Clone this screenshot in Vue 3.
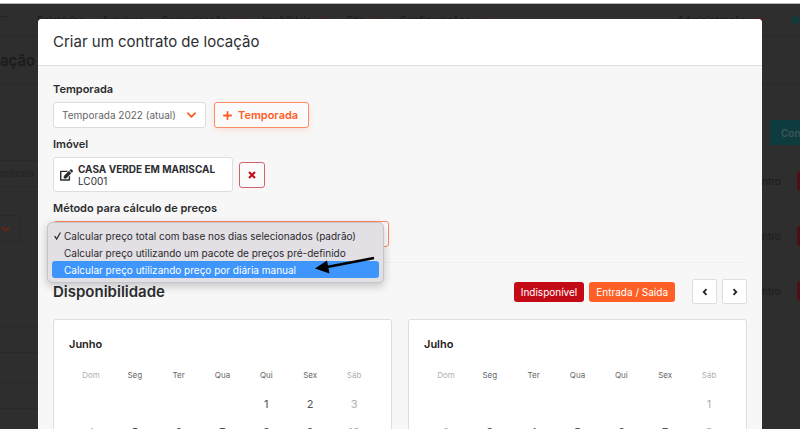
<script setup>
import { ref } from 'vue'

const navItems = [
  { label: 'Relatórios' },
  { label: 'Arquivos' },
  { label: 'Comunicação', menu: true },
  { label: 'Imobiliária', menu: true },
  { label: 'Site', menu: true },
  { label: 'Configurações', menu: true }
]

const weekdays = ['Dom', 'Seg', 'Ter', 'Qua', 'Qui', 'Sex', 'Sáb']

const buildWeeks = (offset, days) => {
  const cells = [...Array(offset).fill(''), ...Array.from({ length: days }, (_, i) => i + 1)]
  const weeks = []
  for (let i = 0; i < cells.length; i += 7) weeks.push(cells.slice(i, i + 7))
  return weeks
}

const months = [
  { name: 'Junho', weeks: buildWeeks(4, 30) },
  { name: 'Julho', weeks: buildWeeks(6, 31) }
]

const methods = [
  'Calcular preço total com base nos dias selecionados (padrão)',
  'Calcular preço utilizando um pacote de preços pré-definido',
  'Calcular preço utilizando preço por diária manual'
]
const method = ref(0)
const hovered = ref(2)
</script>

<template>
  <div class="page">
    <div class="backdrop-page">
      <div class="browser-edge"></div>
      <nav class="topbar">
        <span class="dots">···</span>
        <a v-for="item in navItems" :key="item.label" href="#" class="nav-link">
          {{ item.label }}
          <svg v-if="item.menu" class="nav-chevron" viewBox="0 0 10 6"><path d="M1 1l4 4 4-4" /></svg>
        </a>
        <a href="#" class="nav-link nav-admin">
          Administração
          <svg class="nav-chevron" viewBox="0 0 10 6"><path d="M1 1l4 4 4-4" /></svg>
        </a>
        <svg class="bell" viewBox="0 0 14 16"><path d="M7 0a1 1 0 0 0-1 1v.6C3.700 2 2.200 4 2.200 6.300c0 3.200-1 4.200-1.900 5.200-.6.600-.1 1.500.7 1.500h12c.8 0 1.300-.9.700-1.500-.9-1-1.900-2-1.900-5.200C11.800 4 10.300 2 8 1.600V1a1 1 0 0 0-1-1zm0 16a2 2 0 0 0 2-2H5a2 2 0 0 0 2 2z" /></svg>
      </nav>
      <h1 class="back-title">ação</h1>
      <div class="back-body">
        <div class="back-left">
          <div class="back-input">ontrato</div>
          <div class="back-select">
            <svg viewBox="0 0 10 6"><path d="M1 1l4 4 4-4" /></svg>
          </div>
          <div class="back-rows">
            <div class="back-row"></div>
            <div class="back-row tall"></div>
            <div class="back-row"></div>
            <div class="back-row tall"></div>
          </div>
        </div>
        <div class="back-right">
          <button type="button" class="back-button">Con</button>
          <div v-for="n in 3" :key="n" class="back-item">
            <span>ntro</span>
            <i></i>
          </div>
        </div>
      </div>
    </div>

    <div class="overlay">
      <section class="modal" role="dialog" aria-labelledby="modal-title">
        <header class="modal-header">
          <h2 id="modal-title">Criar um contrato de locação</h2>
        </header>

        <div class="modal-body">
          <label class="field-label" for="season">Temporada</label>
          <div class="field-row">
            <div class="select-wrap season">
              <select id="season">
                <option>Temporada 2022 (atual)</option>
              </select>
              <svg class="chevron" viewBox="0 0 10 6"><path d="M1 1l4 4 4-4" /></svg>
            </div>
            <button type="button" class="btn-add">
              <svg viewBox="0 0 10 10"><path d="M5 1v8M1 5h8" /></svg>
              Temporada
            </button>
          </div>

          <div class="field-label">Imóvel</div>
          <div class="field-row property-row">
            <div class="property">
              <svg viewBox="0 0 576 512"><path d="M402.600 83.200l90.200 90.200c3.800 3.800 3.800 10 0 13.800L274.400 405.600l-92.800 10.300c-12.400 1.400-22.900-9.100-21.500-21.500l10.300-92.800L388.800 83.200c3.800-3.800 10-3.800 13.800 0zm162-22.900l-48.800-48.800c-15.200-15.200-39.900-15.200-55.200 0l-35.400 35.400c-3.800 3.800-3.800 10 0 13.800l90.200 90.200c3.800 3.800 10 3.800 13.800 0l35.400-35.400c15.200-15.300 15.200-40 0-55.200zM384 346.200V448H64V128h229.800c3.200 0 6.200-1.300 8.500-3.500l40-40c7.600-7.600 2.200-20.500-8.500-20.500H48C21.500 64 0 85.500 0 112v352c0 26.500 21.500 48 48 48h352c26.500 0 48-21.500 48-48V306.200c0-10.700-12.900-16-20.500-8.500l-40 40c-2.200 2.300-3.500 5.300-3.500 8.500z" /></svg>
              <div>
                <strong>CASA VERDE EM MARISCAL</strong>
                <span>LC001</span>
              </div>
            </div>
            <button type="button" class="btn-remove" aria-label="Remover">
              <svg viewBox="0 0 8 8"><path d="M1 1l6 6M7 1L1 7" /></svg>
            </button>
          </div>

          <label class="field-label" for="method">Método para cálculo de preços</label>
          <div class="select-wrap method">
            <select id="method" v-model="method">
              <option v-for="(m, i) in methods" :key="m" :value="i">{{ m }}</option>
            </select>
            <ul class="menu" role="listbox">
              <li v-for="(m, i) in methods" :key="m" role="option" :aria-selected="method === i" :class="{ active: hovered === i }" @mouseenter="hovered = i" @click="method = i">
                <svg class="check" viewBox="0 0 8 9"><path v-if="method === i" d="M1 5l2 3 4-7" /></svg>
                <span>{{ m }}</span>
              </li>
            </ul>
            <svg class="pointer" viewBox="0 0 60 20"><path class="shaft" d="M59 2L12 11" /><path class="tip" d="M0 12.500L12 4.500l2.500 13z" /></svg>
          </div>

          <hr class="divider" />

          <div class="availability">
            <h3>Disponibilidade</h3>
            <span class="tag tag-red">Indisponível</span>
            <span class="tag tag-orange">Entrada / Saída</span>
            <div class="pager">
              <button type="button" aria-label="Mês anterior"><svg viewBox="0 0 6 8"><path d="M4.500 1.200L1.700 4l2.800 2.800" /></svg></button>
              <button type="button" aria-label="Próximo mês"><svg viewBox="0 0 6 8"><path d="M1.500 1.200L4.300 4 1.500 6.800" /></svg></button>
            </div>
          </div>

          <div class="calendars">
            <div v-for="month in months" :key="month.name" class="calendar">
              <h4>{{ month.name }}</h4>
              <table>
                <thead>
                  <tr>
                    <th v-for="d in weekdays" :key="d">{{ d }}</th>
                  </tr>
                </thead>
                <tbody>
                  <tr v-for="(week, w) in month.weeks" :key="w">
                    <td v-for="(day, i) in week" :key="i">{{ day }}</td>
                  </tr>
                </tbody>
              </table>
            </div>
          </div>
        </div>
      </section>
    </div>
  </div>
</template>

<style>
body { margin: 0; background: #2e2e2e; }
</style>

<style scoped>
* { box-sizing: border-box; }
h1, h2, h3, h4, ul { margin: 0; padding: 0; }
button, select { font-family: inherit; margin: 0; }
svg { display: block; flex: none; overflow: visible; }

.page { position: relative; height: 100vh; overflow: hidden; font-family: Inter, "Liberation Sans", sans-serif; font-size: 10px; color: #2b2d2f; background: #2e2e2e; }

/* dimmed page behind the modal */
.backdrop-page { color: #1b1b1b; }
.browser-edge { height: 4px; background: #fff; border-bottom: 1px solid #b5b5b5; }
.topbar { display: flex; align-items: center; height: 32px; border-bottom: 1px solid #292929; }
.dots { width: 37px; line-height: 10px; padding-bottom: 8px; }
.nav-link { display: flex; align-items: center; gap: 8px; margin-right: 17px; font-size: 10px; line-height: 16px; font-weight: 500; color: #1b1b1b; text-decoration: none; white-space: nowrap; }
.nav-chevron { width: 10px; height: 6px; }
.nav-chevron path { fill: none; stroke: #5c1a12; stroke-width: 2; }
.nav-admin { margin-left: auto; margin-right: 27px; }
.bell { width: 9px; height: 11px; fill: #0e3b3d; }
.back-title { height: 48px; line-height: 50px; font-size: 15px; font-weight: 600; border-bottom: 1px solid #292929; }
.back-body { display: flex; justify-content: space-between; padding-top: 36px; }
.back-left { width: 60px; padding-top: 40px; }
.back-input { height: 27px; line-height: 25px; border: 1px solid #292929; border-left: 0; color: #232323; }
.back-select { display: flex; align-items: center; width: 21px; height: 27px; margin-top: 28px; padding-left: 1px; border: 1px solid #292929; border-left: 0; border-radius: 0 3px 3px 0; }
.back-select svg { width: 9px; height: 6px; }
.back-select path { fill: none; stroke: #6a2810; stroke-width: 2; }
.back-rows { margin-top: 84px; }
.back-row { height: 26px; border-top: 1px solid #292929; }
.back-row.tall { height: 30px; }
.back-right { width: 38px; }
.back-button { display: block; width: 100%; height: 25px; margin-left: 8px; padding: 0 0 0 11px; border: 0; background: #0e3b3d; color: #3c5556; font-size: 10px; font-weight: 600; text-align: left; }
.back-item { display: flex; align-items: center; justify-content: space-between; height: 55px; }
.back-item:nth-child(2) { margin-top: 8px; }
.back-item i { width: 3px; height: 20px; border-radius: 3px 0 0 3px; background: #4a1216; }

/* modal */
.overlay { position: absolute; inset: 0; padding: 19px 38px 0; overflow-y: auto; scrollbar-width: none; }
.modal { border-radius: 4px 4px 0 0; overflow: hidden; background: #f7f7f7; }
.modal-header { padding: 12px 15px; background: #fff; border-bottom: 1px solid #dedede; }
.modal-header h2 { font-size: 15px; line-height: 22px; font-weight: 400; }
.modal-body { padding: 16px 15px; }

.field-label { display: block; margin-bottom: 6px; font-size: 11px; line-height: 14px; font-weight: 600; }
.field-row { display: flex; align-items: center; gap: 8px; margin-bottom: 9px; }
.property-row { gap: 6px; }
.select-wrap { position: relative; }
.select-wrap select { display: block; width: 100%; height: 26px; padding: 0 8px; border: 1px solid #dcdcdc; border-radius: 3px; background: #fff; color: #666; font-size: 10px; appearance: none; outline: none; }
.season { width: 153px; }
.chevron { position: absolute; top: 10px; right: 10px; width: 9px; height: 6px; pointer-events: none; }
.chevron path { fill: none; stroke: #ff5c26; stroke-width: 2; stroke-linecap: round; stroke-linejoin: round; }
.btn-add { display: flex; align-items: center; gap: 6px; height: 26px; padding: 0 10px 0 8px; border: 1px solid #ff8a64; border-radius: 3px; background: #fbfbfb; color: #ff5c26; font-size: 11px; font-weight: 600; box-shadow: 0 2px 6px rgba(255, 92, 38, 0.15); }
.btn-add svg { width: 9px; height: 9px; }
.btn-add path { stroke: #ff5c26; stroke-width: 2; stroke-linecap: round; }

.property { display: flex; align-items: center; gap: 5px; width: 180px; height: 35px; padding-left: 6px; border: 1px solid #dedede; border-radius: 3px; background: #fff; white-space: nowrap; }
.property svg { width: 13px; height: 12px; fill: #2b2d2f; }
.property strong { display: block; font-size: 10px; line-height: 12px; font-weight: 700; }
.property span { display: block; font-size: 10px; line-height: 12px; }
.btn-remove { display: flex; align-items: center; justify-content: center; width: 26px; height: 26px; padding: 0; border: 1px solid #d2636c; border-radius: 3px; background: #fbfbfb; }
.btn-remove svg { width: 8px; height: 8px; }
.btn-remove path { stroke: #c30b17; stroke-width: 2; }

.method { width: 336px; }
.method select { border-color: #ff8a64; }
.menu { position: absolute; top: 1px; left: -6px; right: 5px; padding: 4px; list-style: none; border: 1px solid #c6c4c8; border-radius: 5px; background: #e2dfe5; box-shadow: 0 3px 10px rgba(0, 0, 0, 0.22); color: #2b2a2d; }
.menu li { display: flex; align-items: center; gap: 3px; height: 17px; padding-left: 2px; border-radius: 3px; font-size: 10px; white-space: nowrap; }
.menu li.active { background: #3e95fb; color: #fff; }
.check { width: 7px; height: 8px; }
.check path { fill: none; stroke: #2b2a2d; stroke-width: 1.4; stroke-linecap: round; }
.pointer { position: absolute; top: 35px; left: 262px; width: 60px; height: 20px; }
.pointer .shaft { fill: none; stroke: #000; stroke-width: 2.500; }
.pointer .tip { fill: #000; }

.divider { height: 1px; margin: 15px 0 16px; border: 0; background: #efefef; }
.availability { display: flex; align-items: center; gap: 5px; margin-bottom: 15px; }
.availability h3 { flex: 1; font-size: 15px; font-weight: 600; }
.tag { padding: 0 7px; border-radius: 3px; color: #fff; font-size: 10px; line-height: 20px; }
.tag-red { background: #c30b17; }
.tag-orange { background: #ff5f26; }
.pager { display: flex; gap: 5px; margin-left: 12px; }
.pager button { display: flex; align-items: center; justify-content: center; width: 25px; height: 25px; padding: 0; border: 1px solid #dedede; border-radius: 2px; background: #fff; }
.pager svg { width: 6px; height: 8px; }
.pager path { fill: none; stroke: #222; stroke-width: 1.800; }

.calendars { display: flex; gap: 16px; }
.calendar { flex: 1; padding: 16px 15px; border: 1px solid #dedede; border-radius: 3px; background: #fff; }
.calendar h4 { font-size: 11px; line-height: 16px; font-weight: 600; color: #1f2022; }
.calendar table { width: 100%; margin-top: 8px; border-spacing: 0; border-collapse: collapse; table-layout: fixed; }
.calendar thead tr { height: 30px; }
.calendar th { padding: 0; font-size: 8px; font-weight: 400; color: #666; }
.calendar td { height: 28px; padding: 0; font-size: 11px; text-align: center; color: #555; }
.calendar th:first-child, .calendar th:last-child, .calendar td:first-child, .calendar td:last-child { color: #b0b0b0; }
</style>
